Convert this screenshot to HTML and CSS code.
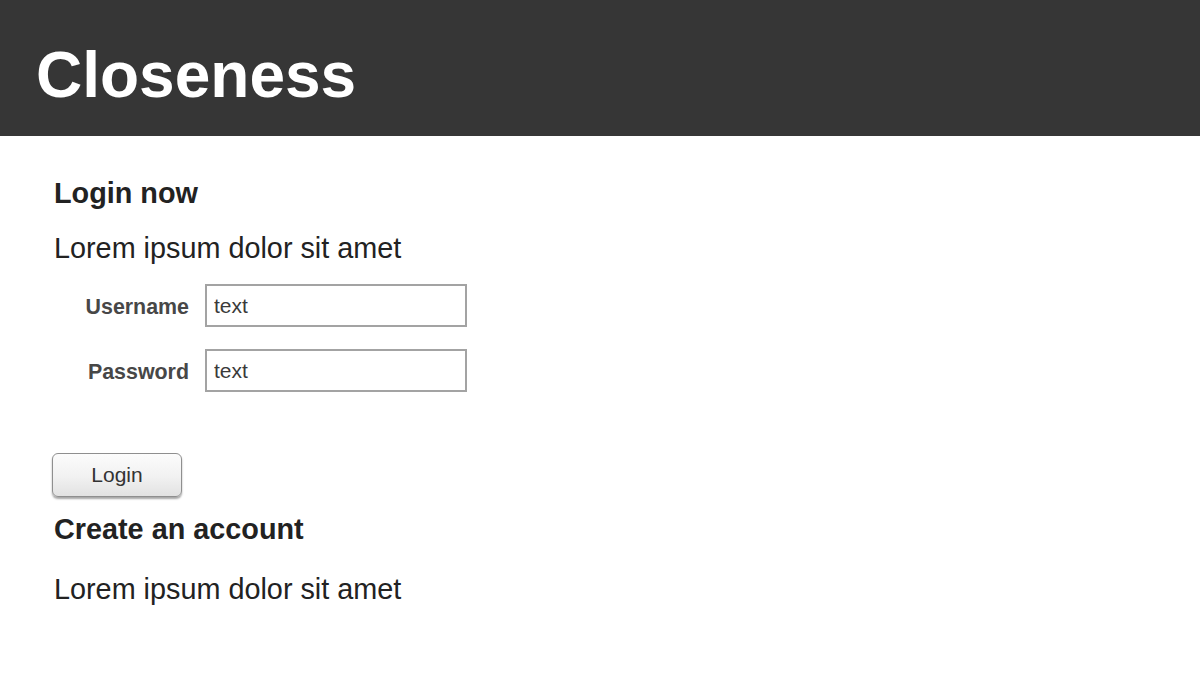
FILE: index.html
```html
<!DOCTYPE html>
<html lang="en">
<head>
<meta charset="utf-8">
<title>Closeness</title>
<link rel="stylesheet" href="styles.css">
</head>
<body>
<header class="topbar">
  <h1 class="brand">Closeness</h1>
</header>
<main class="content">
  <h2 class="section-title first">Login now</h2>
  <p class="lead">Lorem ipsum dolor sit amet</p>
  <form class="login-form">
    <div class="field-row">
      <label class="field-label" for="username">Username</label>
      <input class="field-input" id="username" type="text" value="text">
    </div>
    <div class="field-row">
      <label class="field-label" for="password">Password</label>
      <input class="field-input" id="password" type="text" value="text">
    </div>
    <button class="btn" type="button">Login</button>
  </form>
  <h2 class="section-title second">Create an account</h2>
  <p class="lead second-lead">Lorem ipsum dolor sit amet</p>
</main>
</body>
</html>
```
FILE: styles.css
```css
* { box-sizing: border-box; }
html, body {
  margin: 0;
  padding: 0;
  background: #ffffff;
  font-family: "Liberation Sans", Arial, Helvetica, sans-serif;
  color: #222222;
}
.topbar {
  height: 136px;
  background: #363636;
  padding: 43px 0 0 36px;
}
.brand {
  margin: 0;
  font-size: 64px;
  line-height: 64px;
  font-weight: 700;
  color: #ffffff;
}
.content {
  padding: 0 0 0 54px;
}
.section-title {
  margin: 0;
  font-size: 28.8px;
  line-height: 32px;
  font-weight: 700;
  color: #222222;
}
.section-title.first { margin-top: 41px; }
.section-title.second { margin-top: 16px; }
.lead {
  margin: 22px 0 0;
  font-size: 28.8px;
  line-height: 34px;
  color: #222222;
}
.lead.second-lead { margin-top: 27px; }
.login-form {
  margin-top: 19px;
  display: flex;
  flex-direction: column;
  align-items: flex-start;
}
.field-row {
  display: grid;
  grid-template-columns: 135px 262px;
  column-gap: 16px;
  align-items: center;
  margin-bottom: 22px;
}
.field-label {
  text-align: right;
  font-size: 21.4px;
  line-height: 26px;
  padding-top: 2px;
  font-weight: 700;
  color: #474747;
}
.field-input {
  width: 262px;
  height: 43px;
  border: 2px solid #a3a3a3;
  padding: 0 0 0 7px;
  margin: 0;
  font-family: "Liberation Sans", Arial, sans-serif;
  font-size: 21px;
  color: #3a3a3a;
  background: #ffffff;
  outline: none;
}
.btn {
  margin: 39px 0 0 -2px;
  width: 130px;
  height: 44px;
  border: 1px solid #8f8f8f;
  border-radius: 6px;
  background: linear-gradient(#fcfcfc, #f1f1f1 55%, #e2e2e2);
  box-shadow: 0 2px 2px rgba(0, 0, 0, 0.35);
  font-family: "Liberation Sans", Arial, sans-serif;
  font-size: 21px;
  color: #333333;
  padding: 0;
}
```
